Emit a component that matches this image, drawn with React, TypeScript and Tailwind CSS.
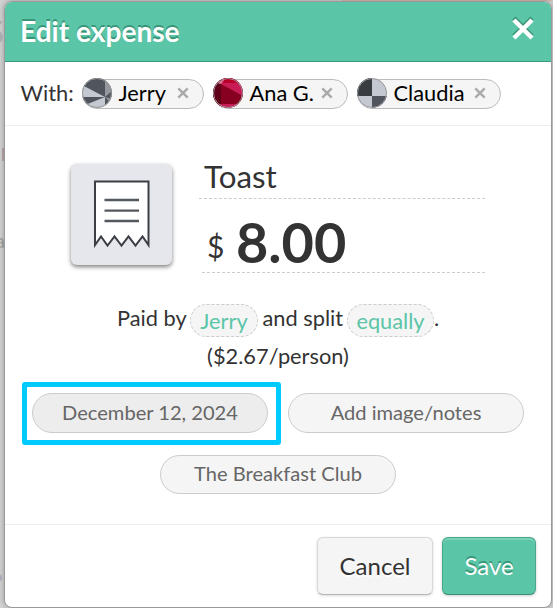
import type { ReactNode } from "react";

function Chip({ name, width, children }: { name: string; width: string; children: ReactNode }) {
  return (
    <div
      className={`flex h-[30px] items-center rounded-full border border-[#bbb] bg-[#f5f5f5] ${width}`}
    >
      <svg viewBox="0 0 30 30" className="-mt-[2px] -ml-[1px] size-[30px] shrink-0 overflow-hidden rounded-full">
        {children}
        <circle cx="15" cy="15" r="14.5" fill="none" stroke="#999" />
      </svg>
      <span className="-mt-[2px] ml-[6.5px] text-[21.8px] leading-[28px] whitespace-nowrap text-black">{name}</span>
      <svg viewBox="0 0 12 12" className="-mt-[2px] mr-[14px] ml-auto size-[12px] shrink-0">
        <path d="M1.3 1.3 10.7 10.7M10.7 1.3 1.3 10.7" stroke="#aaa" strokeWidth="2.4" />
      </svg>
    </div>
  );
}

function ReceiptIcon() {
  return (
    <svg viewBox="0 0 101 101" className="size-[101px]">
      <path
        d="M24 81V17.500H77.500V81L71.500 72.500 64.500 81.500 57.500 72.500 50.500 81.500 43.500 72.500 36.500 81.500 30 72.500Z"
        fill="#fff"
        stroke="#3b3e44"
        strokeWidth="2"
      />
      <path d="M33.500 36H68M33.500 46.700H68M33.500 57H68" stroke="#54595f" strokeWidth="2.300" />
    </svg>
  );
}

function Pill({ children, tone }: { children: ReactNode; tone: string }) {
  return (
    <button
      className={`w-[236px] shrink-0 rounded-[20px] border border-[#ccc] pb-[2px] text-[20.1px] leading-none text-[#666] ${tone}`}
    >
      {children}
    </button>
  );
}

export default function App() {
  return (
    <div className="relative h-[608px] w-[553px] overflow-hidden bg-[#d5d5d5] pt-px pl-[4px] font-['Lato',sans-serif] text-[#333]">
      <div className="absolute top-0 left-[342px] h-px w-[211px] bg-[#d8bdb0]" />
      <div className="absolute top-[4px] -left-[16px] text-[36px] font-bold text-[#b5b5b5]">S</div>
      <div className="absolute top-[148px] left-[2px] h-[13px] w-[2px] bg-[#c0aaaa]" />
      <div className="absolute top-[225px] -left-[5px] text-[20px] text-[#a5a5a5]">a</div>
      <div className="absolute top-[574px] -left-[6px] size-2 rounded-full bg-[#b8b5c8]" />
      <div className="relative flex h-[607px] w-[548px] flex-col overflow-hidden rounded-[8px] border border-[#999] bg-white shadow-[0_0_7px_rgba(0,0,0,0.3)]">
        <header className="flex h-[60px] shrink-0 items-center justify-between border-b border-[#3d997c] bg-[#5bc5a7] pr-[17px] pl-[15px]">
          <h1 className="text-[28.1px] leading-none font-bold text-white [text-shadow:0_-2px_0_#389477]">Edit expense</h1>
          <svg viewBox="0 0 22 24" className="mb-[7px] h-[24px] w-[22px]">
            <path d="M2 2 20 20M20 2 2 20" stroke="#389477" strokeWidth="4.500" />
            <path d="M2 4 20 22M20 4 2 22" stroke="#fff" strokeWidth="4.500" />
          </svg>
        </header>
        <section className="flex h-[64px] shrink-0 items-center border-b border-[#eee] pl-[15.5px]">
          <span className="-mt-[2px] w-[61.5px] text-[21.8px] leading-none">With:</span>
          <div className="flex gap-[9px]">
            <Chip name="Jerry" width="w-[122px]">
              <rect width="30" height="30" fill="#50545c" />
              <path d="M0 7 23 19 0 19ZM3 27 23 19 23 30 8 30Z" fill="#c4c8d0" />
              <path d="M23 0H30V13L23 19ZM23 19 30 21V26Z" fill="#94979d" />
            </Chip>
            <Chip name="Ana G." width="w-[135px]">
              <rect width="30" height="30" fill="#870021" />
              <path d="M0 0H8V30H0Z" fill="#5e0017" />
              <path d="M8 6 30 18V0H8Z" fill="#c81c56" />
              <path d="M11 0H27L28 5 10 5Z" fill="#b80029" />
              <path d="M4 26H30V30H4Z" fill="#c81c56" />
              <path d="M4 5 12 1 8 6Z" fill="#dd7890" />
            </Chip>
            <Chip name="Claudia" width="w-[144px]">
              <rect width="30" height="30" fill="#c4c8d0" />
              <path d="M0 0H15V18H0Z" fill="#393c41" />
              <path d="M15 18H30V30H15Z" fill="#50545c" />
            </Chip>
          </div>
        </section>
        <main className="flex h-[399px] shrink-0 flex-col border-b border-[#eee]">
          <div className="mt-[38px] ml-[66px] flex h-[110px]">
            <div className="size-[101px] rounded-[6px] bg-[#e6e7ec] shadow-[0_2px_4px_rgba(0,0,0,0.5)]">
              <ReceiptIcon />
            </div>
            <div className="ml-[27px] w-[286px]">
              <div className="h-[35px] border-b border-dashed border-[#ccc] pl-[5px] text-[31.3px] leading-[25px]">Toast</div>
              <div className="ml-[3px] flex h-[74px] items-start border-b border-dashed border-[#ccc] pl-[5px]">
                <span className="text-[30px] leading-[94px]">$</span>
                <span className="ml-[11.5px] text-[55.8px] leading-[86px] font-bold">8.00</span>
              </div>
            </div>
          </div>
          <div className="mt-[30px] ml-[112px] flex h-[33px] text-[21.8px] leading-[28px]">
            <span className="w-[73px]">Paid by</span>
            <span className="h-[33px] w-[68px] rounded-full border border-dashed border-[#ccc] bg-[#f5f5f5] text-center leading-[32px] text-[#5bc5a7]">
              Jerry
            </span>
            <span className="w-[89px] pl-[4.5px]">and split</span>
            <span className="h-[33px] w-[87px] rounded-full border border-dashed border-[#ccc] bg-[#f5f5f5] text-center leading-[32px] text-[#5bc5a7]">
              equally
            </span>
            <span>.</span>
          </div>
          <div className="mt-[6px] h-[26px] text-center text-[21.8px] leading-[26px]">($2.67/person)</div>
          <div className="mt-[13px] ml-[17px] flex items-start gap-[7px]">
            <div className="flex h-[63px] w-[259px] items-start rounded-[3px] border-[5px] border-[#00cbff] pt-[6px] pl-[5px]">
              <Pill tone="h-10 bg-[#ededed]">December 12, 2024</Pill>
            </div>
            <div className="pt-[11px]">
              <Pill tone="h-10 bg-[#f5f5f5]">Add image/notes</Pill>
            </div>
          </div>
          <div className="mt-[10px] flex justify-center">
            <Pill tone="h-[39px] bg-[#f5f5f5]">The Breakfast Club</Pill>
          </div>
        </main>
        <footer className="flex justify-end gap-[9px] pt-[12px] pr-[15px]">
          <button className="h-[58px] w-[116px] rounded-[6px] border border-[#d8d8d8] border-b-[#b5b5b5] bg-[#f5f5f5] text-[24px] shadow-[0_1px_3px_rgba(0,0,0,0.15)] [text-shadow:0_2px_0_#fff]">
            Cancel
          </button>
          <button className="h-[58px] w-[94px] rounded-[6px] border border-[#48a88b] border-b-[#3a8f74] bg-[#5bc5a7] text-[24px] text-white shadow-[inset_0_2px_0_rgba(255,255,255,0.2),0_1px_3px_rgba(0,0,0,0.2)] [text-shadow:0_-2px_0_#389477]">
            Save
          </button>
        </footer>
      </div>
    </div>
  );
}
